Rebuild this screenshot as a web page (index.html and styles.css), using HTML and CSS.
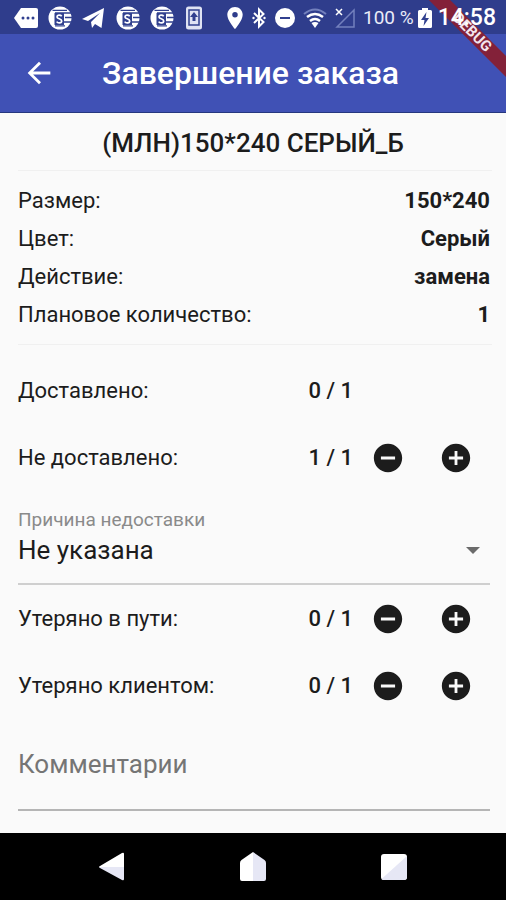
FILE: index.html
```html
<!DOCTYPE html>
<html lang="ru">
<head>
<meta charset="utf-8">
<meta name="viewport" content="width=device-width, initial-scale=1">
<title>Завершение заказа</title>
<link rel="stylesheet" href="styles.css">
</head>
<body>
<svg class="defs" aria-hidden="true">
  <symbol id="coin" viewBox="0 0 24 24">
    <circle cx="12" cy="12" r="11.5" fill="#fff"/>
    <path d="M4.500 4.300H19M7 7H24M17 11.500H24M16 16H24M7 19.800H17" stroke="#31408f" stroke-width="1.300" fill="none"/>
    <rect x="6.500" y="7" width="9.500" height="12" fill="#31408f"/>
    <path d="M13.700 10.300C12.500 8.700 9 8.800 9 10.900C9 13.300 13.700 12.300 13.700 15C13.700 17.400 9.800 17.500 8.700 15.600" stroke="#fff" stroke-width="1.700" fill="none"/>
  </symbol>
  <symbol id="minus" viewBox="0 0 24 24"><path d="M12 2C6.480 2 2 6.480 2 12s4.480 10 10 10 10-4.480 10-10S17.520 2 12 2zm5 11H7v-2h10v2z"/></symbol>
  <symbol id="plus" viewBox="0 0 24 24"><path d="M12 2C6.480 2 2 6.480 2 12s4.480 10 10 10 10-4.480 10-10S17.520 2 12 2zm5 11h-4v4h-2v-4H7v-2h4V7h2v4h4v2z"/></symbol>
</svg>
<div class="screen">
  <div class="status">
    <div class="status-side notices">
      <svg width="24" height="20" viewBox="0 0 24 20"><path d="M7 0H22Q24 0 24 2V18Q24 20 22 20H7L0 10Z" fill="#fff"/><g fill="#31408f"><circle cx="9" cy="10" r="1.500"/><circle cx="14" cy="10" r="1.500"/><circle cx="19" cy="10" r="1.500"/></g></svg>
      <svg width="24" height="24"><use href="#coin"/></svg>
      <svg width="24" height="24" viewBox="0 0 24 24"><path d="M0 13L22 2L19.500 22L13 18L10 22L9 16L18 7L6 15Z" fill="#fff"/></svg>
      <svg width="24" height="24"><use href="#coin"/></svg>
      <svg width="24" height="24"><use href="#coin"/></svg>
      <svg class="phone" width="16" height="24" viewBox="0 0 16 24"><rect width="16" height="23" y=".5" rx="2.500" fill="#dfe3f3"/><path d="M3 4H13V19H3Z" fill="none" stroke="#31408f" stroke-width="1.500"/><path d="M8 6L12 11H9.500V15H6.500V11H4Z" fill="#31408f"/><path d="M5 17H11" stroke="#dfe3f3"/></svg>
    </div>
    <div class="status-side system">
      <svg width="16" height="22" viewBox="0 0 14 20"><path d="M7 0C3.130 0 0 3.130 0 7c0 5.250 7 13 7 13s7-7.750 7-13c0-3.870-3.130-7-7-7zm0 9.500a2.500 2.500 0 1 1 0-5 2.500 2.500 0 0 1 0 5z" fill="#fff"/></svg>
      <svg width="16" height="22" viewBox="0 0 16 22"><path d="M3 6L12.500 15L8 19.500V2.500L12.500 7L3 16" fill="none" stroke="#fff" stroke-width="2"/><circle cx="2.500" cy="11" r="1.200" fill="#fff"/><circle cx="13.500" cy="11" r="1.200" fill="#fff"/></svg>
      <svg class="dnd" width="20" height="20" viewBox="0 0 20 20"><circle cx="10" cy="10" r="10" fill="#fff"/><path d="M5 10H15" stroke="#31408f" stroke-width="2"/></svg>
      <svg width="24" height="20" viewBox="0 0 24 20"><path d="M1 6Q12 -3 23 6" fill="none" stroke="#7380bd" stroke-width="2"/><path d="M4 9Q12 3 20 9M7 13Q12 9 17 13" fill="none" stroke="#fff" stroke-width="2.500"/><path d="M8.500 15Q12 13 15.500 15L12 20Z" fill="#fff"/></svg>
      <svg width="20" height="20" viewBox="0 0 20 20"><path d="M19 2V19H2Z" fill="none" stroke="#7380bd" stroke-width="1.500"/><path d="M1 1L7 7M7 1L1 7" stroke="#fff" stroke-width="1.500"/></svg>
      <span class="percent">100 %</span>
      <svg class="battery" width="14" height="20" viewBox="0 0 14 20"><path d="M4 0H10V2H12.500Q14 2 14 3.500V18.500Q14 20 12.500 20H1.500Q0 20 0 18.500V3.500Q0 2 1.500 2H4Z" fill="#fff"/><path d="M8.500 4L3 12H6.500L5.500 18L11 10H7.500Z" fill="#31408f"/></svg>
      <span class="clock">14:58</span>
    </div>
  </div>
  <header class="appbar">
    <button class="back" type="button" aria-label="Назад"><svg width="34" height="34" viewBox="0 0 24 24"><path d="M20 11H7.830l5.590-5.590L12 4l-8 8 8 8 1.410-1.410L7.830 13H20v-2z" fill="#fff"/></svg></button>
    <h1>Завершение заказа</h1>
  </header>
  <main>
    <h2>(МЛН)150*240 СЕРЫЙ_Б</h2>
    <dl class="details">
      <div><dt>Размер:</dt><dd>150*240</dd></div>
      <div><dt>Цвет:</dt><dd>Серый</dd></div>
      <div><dt>Действие:</dt><dd>замена</dd></div>
      <div><dt>Плановое количество:</dt><dd>1</dd></div>
    </dl>
    <form>
      <div class="counter"><span>Доставлено:</span><output>0 / 1</output></div>
      <div class="counter"><span>Не доставлено:</span><output>1 / 1</output>
        <button type="button" aria-label="Уменьшить: не доставлено"><svg><use href="#minus"/></svg></button>
        <button type="button" aria-label="Увеличить: не доставлено"><svg><use href="#plus"/></svg></button></div>
      <div class="reason">
        <label for="reason">Причина недоставки</label>
        <div class="select-box">
          <select id="reason"><option>Не указана</option></select>
          <svg width="14" height="7" viewBox="0 0 14 7"><path d="M0 0H14L7 7Z" fill="#6b6b6b"/></svg>
        </div>
      </div>
      <div class="counter"><span>Утеряно в пути:</span><output>0 / 1</output>
        <button type="button" aria-label="Уменьшить: утеряно в пути"><svg><use href="#minus"/></svg></button>
        <button type="button" aria-label="Увеличить: утеряно в пути"><svg><use href="#plus"/></svg></button></div>
      <div class="counter"><span>Утеряно клиентом:</span><output>0 / 1</output>
        <button type="button" aria-label="Уменьшить: утеряно клиентом"><svg><use href="#minus"/></svg></button>
        <button type="button" aria-label="Увеличить: утеряно клиентом"><svg><use href="#plus"/></svg></button></div>
      <input class="comment" type="text" placeholder="Комментарии" aria-label="Комментарии">
    </form>
  </main>
  <nav class="navbar" aria-label="Система">
    <button type="button" aria-label="Назад"><svg width="28" height="30" viewBox="0 0 28 30"><path d="M2 14L24 1Q26 0 26 2V15H1Q1 14.500 2 14Z" fill="#fff"/><path d="M1 15H26V27Q26 29 24 28L2 16Q1 15.500 1 15Z" fill="#e6e7f5"/></svg></button>
    <button type="button" aria-label="Домой"><svg width="28" height="30" viewBox="0 0 28 30"><path d="M14 0L2.500 8Q1 9 1 11V27Q1 29 3 29H14Z" fill="#fff"/><path d="M14 0L25.500 8Q27 9 27 11V27Q27 29 25 29H14Z" fill="#e6e7f5"/></svg></button>
    <button type="button" aria-label="Недавние"><svg width="28" height="30" viewBox="0 0 28 30"><rect x="1" y="2" width="26" height="26" rx="3" fill="#fff"/><path d="M27 4V25Q27 28 24 28H4Q2 28 1.500 27Z" fill="#e6e7f5"/></svg></button>
  </nav>
  <div class="debug"><span>DEBUG</span></div>
</div>
</body>
</html>
```
FILE: styles.css
```css
* { box-sizing: border-box; }
body { margin: 0; background: #fafafa; color: #1c1c1c; font-family: Roboto, "Liberation Sans", sans-serif; font-size: 22px; line-height: 26px; }
h1, h2, dl, dd { margin: 0; }
button { display: flex; align-items: center; justify-content: center; padding: 0; border: 0; background: none; cursor: pointer; }
svg { display: block; flex: none; }
.defs { position: absolute; width: 0; height: 0; }
.screen { position: relative; display: flex; flex-direction: column; min-height: 100vh; overflow: hidden; }

.status { display: flex; justify-content: space-between; height: 34px; padding: 2px 10px 0 14px; background: #2f3d8c; color: #e9ecf8; }
.status-side { display: flex; align-items: center; }
.notices { gap: 10px; }
.phone { margin-left: 2px; }
.system { gap: 8px; }
.percent { font-size: 19px; }
.battery { margin-left: -4px; }
.clock { position: relative; z-index: 2; margin-left: -2px; color: #fff; font-size: 23px; font-weight: 500; }

.appbar { display: flex; align-items: center; height: 79px; padding: 0 22px; gap: 46px; background: #4051b5; color: #fff; border-bottom: 1px solid #26377f; }
.appbar h1 { font-size: 32px; line-height: 36px; font-weight: 500; white-space: nowrap; }

main { flex: 1; padding: 0 16px 0 18px; }
h2 { margin-right: -2px; padding: 16px 4px 13px 0; font-size: 26px; line-height: 28px; font-weight: 500; text-align: center; border-bottom: 1px solid #f0f0f0; }
.details { margin-right: -2px; padding: 11px 2px 10px 0; border-bottom: 1px solid #f0f0f0; }
.details div { display: flex; justify-content: space-between; padding: 6px 0; }
.details dd { font-weight: 700; }
form { padding-top: 12px; }
.counter { display: flex; align-items: center; height: 67px; }
.counter span { flex: 1; }
.counter output { font-weight: 500; margin-right: 1px; }
.counter output:last-child { margin-right: 137px; }
.counter button { width: 68px; height: 67px; }
.counter svg { width: 34px; height: 34px; fill: #1c1c1c; }
.reason { padding-top: 17px; border-bottom: 2px solid #cfcfcf; }
.reason label { display: block; font-size: 19px; line-height: 24px; color: #8a8a8a; }
.select-box { display: flex; align-items: center; position: relative; padding-bottom: 15px; }
select { appearance: none; width: 100%; height: 36px; padding: 0; border: 0; background: none; color: #1c1c1c; font: inherit; font-size: 26px; line-height: 36px; }
.select-box svg { position: absolute; right: 10px; pointer-events: none; }
.comment { display: block; width: 100%; height: 92px; padding: 0; border: 0; border-bottom: 2px solid #b5b5b5; border-radius: 0; background: none; font: inherit; font-size: 26px; line-height: 36px; }
.comment::placeholder { color: #757575; opacity: 1; }

.navbar { display: flex; justify-content: center; height: 67px; background: #000; }
.navbar button { width: 141px; height: 67px; }

.debug { position: absolute; top: 0; right: 0; width: 84px; height: 84px; overflow: hidden; pointer-events: none; }
.debug span { position: absolute; top: 25px; left: -25px; width: 150px; height: 15px; background: #832139; color: #f3e6ee; font-size: 15px; line-height: 15px; font-weight: 700; text-align: center; transform: rotate(45deg); }
```
